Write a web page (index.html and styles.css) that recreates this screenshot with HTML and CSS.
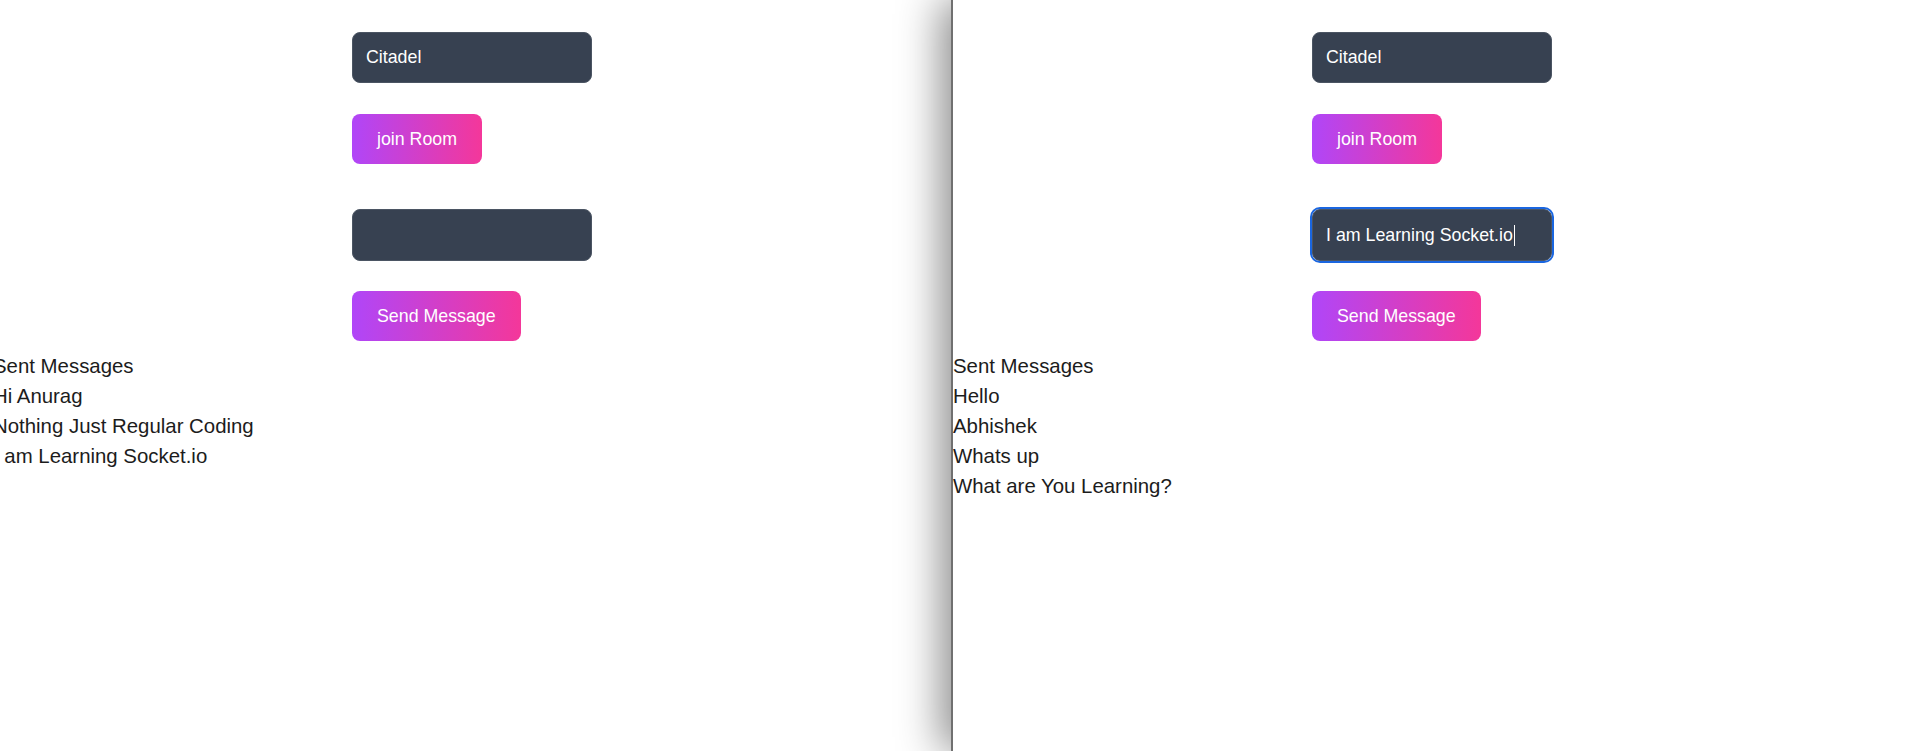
FILE: index.html
```html
<!DOCTYPE html>
<html lang="en">
<head>
<meta charset="utf-8">
<title>Socket.io rooms</title>
<link rel="stylesheet" href="styles.css">
</head>
<body>
<div class="screen">
  <section class="pane pane-left">
    <div class="app app-shifted">
      <div class="controls">
        <div class="field field-room">Citadel</div>
        <button class="btn btn-join">join Room</button>
        <div class="field field-msg"></div>
        <button class="btn btn-send">Send Message</button>
      </div>
      <ul class="messages">
        <li>Sent Messages</li>
        <li>Hi Anurag</li>
        <li>Nothing Just Regular Coding</li>
        <li>I am Learning Socket.io</li>
      </ul>
    </div>
  </section>
  <section class="pane pane-right">
    <div class="app">
      <div class="controls">
        <div class="field field-room">Citadel</div>
        <button class="btn btn-join">join Room</button>
        <div class="field field-msg field-focus">I am Learning Socket.io<span class="caret"></span></div>
        <button class="btn btn-send">Send Message</button>
      </div>
      <ul class="messages">
        <li>Sent Messages</li>
        <li>Hello</li>
        <li>Abhishek</li>
        <li>Whats up</li>
        <li>What are You Learning?</li>
      </ul>
    </div>
  </section>
</div>
</body>
</html>
```
FILE: styles.css
```css
html, body {
  margin: 0;
  padding: 0;
  background: #ffffff;
}

body {
  font-family: "Liberation Sans", Arial, sans-serif;
  color: #1c1c1c;
}

.screen {
  display: flex;
  height: 751px;
  overflow: hidden;
}

.pane {
  background: #ffffff;
  overflow: hidden;
}

.pane-left {
  width: 951px;
  flex: none;
}

.pane-right {
  flex: 1;
  border-left: 2px solid #707070;
  box-shadow: -10px 0 40px rgba(0, 0, 0, 0.45);
  position: relative;
  z-index: 1;
}

.app-shifted {
  margin-left: -7px;
}

.controls {
  display: flex;
  flex-direction: column;
  align-items: flex-start;
  padding: 32px 0 0 359px;
}

.field {
  box-sizing: border-box;
  width: 240px;
  height: 51px;
  background: #374151;
  border: 1px solid #4b5563;
  border-radius: 8px;
  color: #ffffff;
  font-size: 17.8px;
  display: flex;
  align-items: center;
  padding: 0 13px;
  white-space: nowrap;
}

.field-msg {
  height: 52px;
  margin-bottom: 30px;
}

.field-room {
  margin-bottom: 31px;
}

.field-focus {
  outline: 2px solid #1a66e0;
  outline-offset: 0;
}

.caret {
  display: inline-block;
  width: 1px;
  height: 21px;
  background: #ffffff;
  margin-left: 1px;
}

.btn {
  box-sizing: border-box;
  height: 50px;
  border: none;
  border-radius: 8px;
  padding: 0 25px;
  background: linear-gradient(to right, #b046f8, #f4379a);
  color: #ffffff;
  font-family: "Liberation Sans", Arial, sans-serif;
  font-size: 17.8px;
  cursor: pointer;
}

.btn-join {
  margin-bottom: 45px;
}

.messages {
  list-style: none;
  margin: 10px 0 0 0;
  padding: 0;
  font-size: 20.4px;
  line-height: 30px;
  color: #1c1c1c;
}
```
